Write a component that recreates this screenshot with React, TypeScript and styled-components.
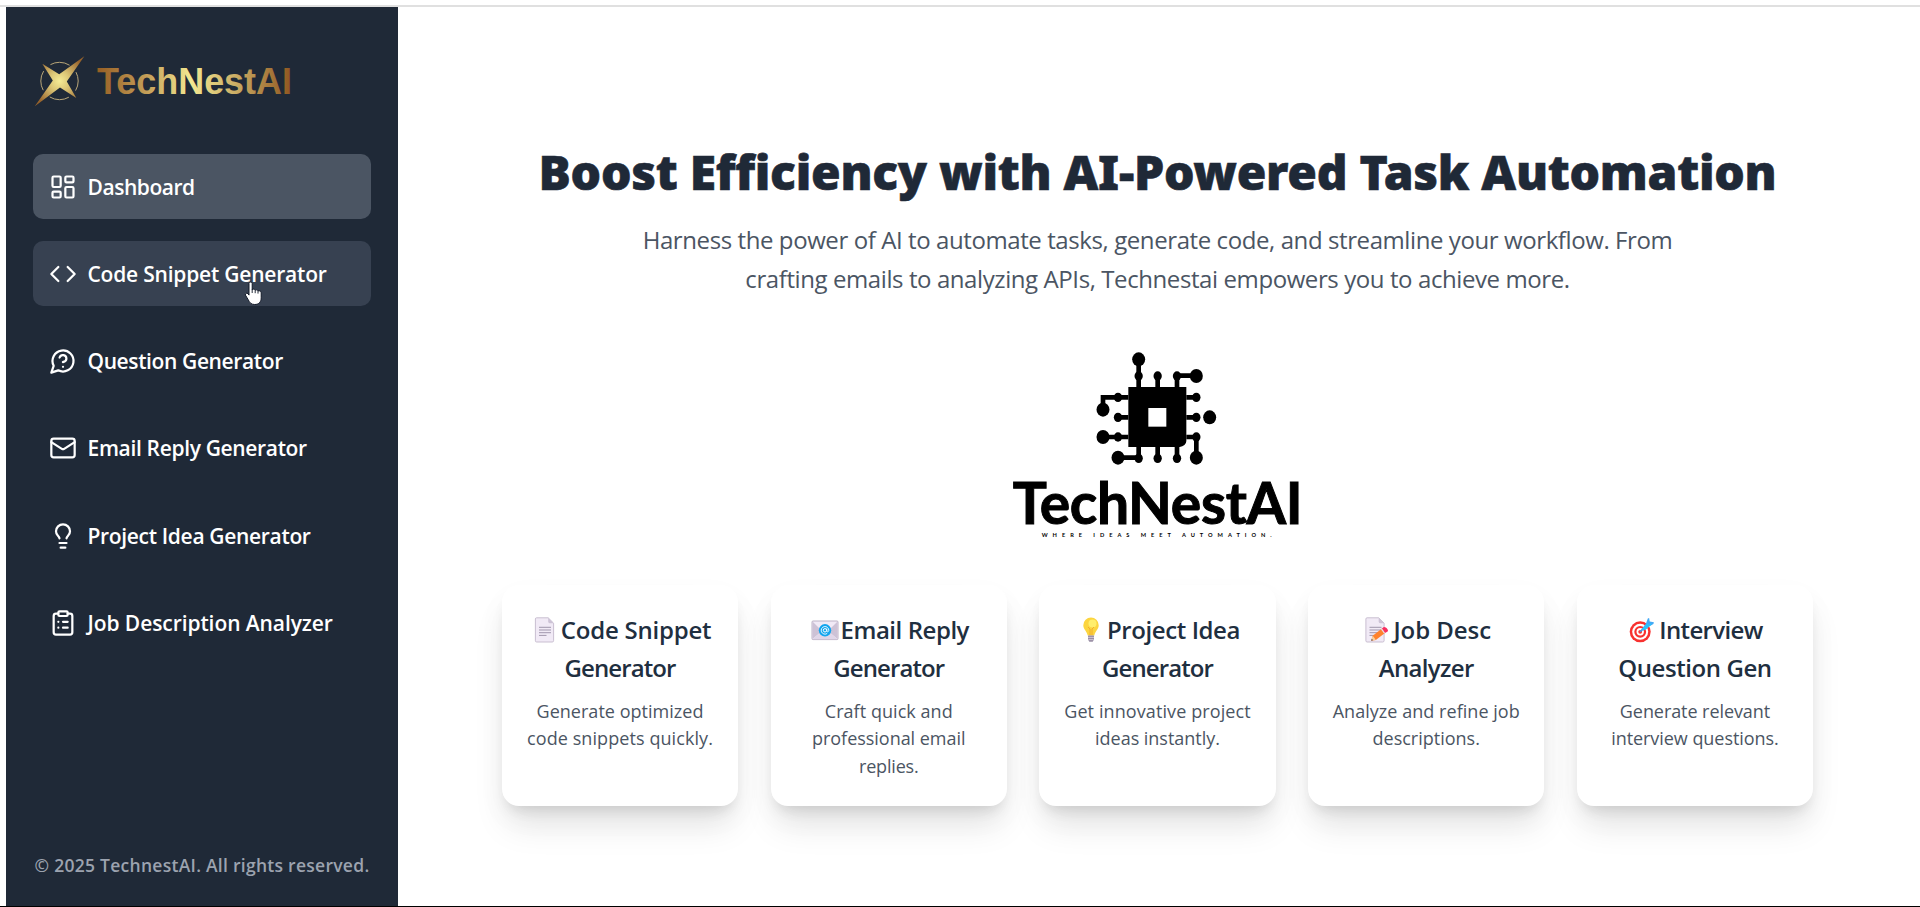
import React from "react";
import styled, { createGlobalStyle } from "styled-components";
import { LayoutDashboard, Code, Mail, Lightbulb, ClipboardList } from "lucide-react";

const GlobalStyle = createGlobalStyle`
  * { box-sizing: border-box; }
  body {
    margin: 0;
    background: #fff;
    font-family: "Open Sans", "Noto Sans", sans-serif;
  }
`;

const Page = styled.div`
  height: 907px;
  padding-top: 5px;
  display: flex;
  flex-direction: column;
  overflow: hidden;
  border-bottom: 1px solid #000;
`;

const Shell = styled.div`
  flex: 1;
  min-height: 0;
  display: flex;
  border-top: 2px solid #e0e0e0;
  padding-left: 6px;
`;

const Sidebar = styled.aside`
  width: 392px;
  flex-shrink: 0;
  display: flex;
  flex-direction: column;
  padding: 43px 27px 28px;
  background: #1f2937;
  color: #fff;
`;

const BrandLogo = styled.svg`
  display: block;
  width: 280px;
  height: 60px;
  margin-bottom: 44px;
`;

const Nav = styled.nav`
  display: flex;
  flex-direction: column;
  gap: 22.25px;
`;

const NavItem = styled.a<{ $bg?: string; $tracking: number }>`
  position: relative;
  display: flex;
  align-items: center;
  gap: 11px;
  height: 65px;
  padding-left: 15.5px;
  border-radius: 10px;
  background: ${(p) => p.$bg ?? "transparent"};
  font-size: 21px;
  font-weight: 600;
  letter-spacing: ${(p) => p.$tracking}px;
  white-space: nowrap;
`;

const Pointer = styled.svg`
  position: absolute;
  left: 211px;
  top: 39.5px;
  width: 19px;
  height: 25px;
`;

const Copyright = styled.p`
  margin: auto 0 0;
  text-align: center;
  color: #9ca3af;
  font-size: 17.5px;
  font-weight: 600;
  line-height: 26px;
  letter-spacing: 0.27px;
  white-space: nowrap;
`;

const Main = styled.main`
  flex: 1;
  display: flex;
  flex-direction: column;
  align-items: center;
  padding: 139px 3px 0 0;
`;

const Heading = styled.h1`
  margin: 0 0 22px;
  color: #1f2937;
  font-family: "Noto Sans", sans-serif;
  font-size: 48px;
  font-weight: 900;
  line-height: 52px;
  letter-spacing: -0.29px;
  -webkit-text-stroke: 0.6px #1f2937;
  white-space: nowrap;
`;

const Intro = styled.p`
  margin: 0 0 32px;
  width: 1060px;
  text-align: center;
  color: #4b5563;
  font-size: 24px;
  line-height: 39px;
  letter-spacing: -0.41px;
`;

const ChipLogo = styled.svg`
  display: block;
  width: 350px;
  height: 220px;
  margin-bottom: 35px;
`;

const CardGrid = styled.section`
  display: grid;
  grid-template-columns: repeat(5, 1fr);
  gap: 32.7px;
  width: 1311px;
`;

const Card = styled.article`
  height: 221px;
  padding-top: 26px;
  border-radius: 17px;
  background: #fff;
  text-align: center;
  box-shadow: 0 24px 34px -5px rgba(0, 0, 0, 0.1), 0 9px 14px -6px rgba(0, 0, 0, 0.12),
    0 12px 32px rgba(0, 0, 0, 0.03);
`;

const CardTitle = styled.h3`
  margin: 0 0 10.5px;
  color: #1f2f40;
  font-size: 24px;
  font-weight: 600;
  line-height: 38px;
`;

const CardText = styled.p`
  margin: 0;
  color: #4b5563;
  font-size: 18px;
  line-height: 27.5px;
`;

const Line = styled.span<{ $tracking: number }>`
  display: block;
  letter-spacing: ${(p) => p.$tracking}px;
  white-space: nowrap;
`;

const Emoji = styled.svg`
  width: 32px;
  height: 26px;
  vertical-align: -4px;
`;

const iconProps = { size: 28, strokeWidth: 1.9 };

const QuestionBubble = () => (
  <svg width="28" height="28" viewBox="0 0 24 24" fill="none" stroke="currentColor" strokeWidth="1.9" strokeLinecap="round" strokeLinejoin="round">
    <path d="M7.9 20A9 9 0 1 0 4 16.1L2 22Z" />
    <path d="M9.09 9a3 3 0 0 1 5.83 1c0 2-3 3-3 3" />
    <path d="M12 17h.01" />
  </svg>
);

const navItems = [
  { label: "Dashboard", icon: <LayoutDashboard {...iconProps} />, tracking: -0.46, bg: "#4b5563" },
  { label: "Code Snippet Generator", icon: <Code {...iconProps} />, tracking: -0.21, bg: "#374151", pointer: true },
  { label: "Question Generator", icon: <QuestionBubble />, tracking: -0.38 },
  { label: "Email Reply Generator", icon: <Mail {...iconProps} />, tracking: -0.34 },
  { label: "Project Idea Generator", icon: <Lightbulb {...iconProps} />, tracking: -0.33 },
  { label: "Job Description Analyzer", icon: <ClipboardList {...iconProps} />, tracking: -0.08 },
];

const Sheet = ({ x }: { x: number }) => (
  <>
    <path d={`M${x + 1.6} .8h11.6l5.4 5.4v17.4a1.4 1.4 0 0 1-1.4 1.4H${x + 1.6}a1.2 1.2 0 0 1-1.2-1.2V2A1.2 1.2 0 0 1 ${x + 1.6} .8z`} fill="#f1eaf6" stroke="#c9bfd1" strokeWidth="1" />
    <path d={`M${x + 13.2} .8v4a1.4 1.4 0 0 0 1.4 1.4h4z`} fill="#cdc3d6" />
    <path d={`M${x + 4} 10.3h12M${x + 4} 13h12M${x + 4} 15.7h12M${x + 4} 18.4h7.5`} stroke="#a197ad" strokeWidth="1" />
  </>
);

const emojis = {
  page: (
    <Emoji viewBox="0 0 32 26">
      <Sheet x={6} />
    </Emoji>
  ),
  email: (
    <Emoji viewBox="0 0 32 26">
      <rect x="3" y="4" width="26" height="18.6" rx="1" fill="#f1eaf6" stroke="#bdb2c6" />
      <path d="M3.5 4.5 13 14 3.5 22zM28.5 4.5 19 14l9.5 8z" fill="#cdc2d6" />
      <path d="M3.5 22.2 13 14h6l9.5 8.2z" fill="#e0d6e8" />
      <circle cx="16" cy="13.3" r="6.2" fill="#12a5ee" />
      <circle cx="16" cy="13.3" r="1.7" fill="none" stroke="#fff" />
      <path d="M17.8 11.5v2.3c0 1.5 2 1.2 2-.5a3.8 3.8 0 1 0-1.7 3.2" fill="none" stroke="#fff" strokeWidth=".9" />
    </Emoji>
  ),
  bulb: (
    <Emoji viewBox="0 0 32 26">
      <path d="M16 .5a7.7 7.7 0 0 0-7.7 7.7c0 4.2 3.7 6 4.4 10.2h6.6c.7-4.2 4.4-6 4.4-10.2A7.7 7.7 0 0 0 16 .5z" fill="#fcd53f" />
      <circle cx="17.5" cy="6.5" r="4" fill="#fff478" opacity=".8" />
      <path d="m13 10 2 2v6.4m4-8.4-2 2v6.4" fill="none" stroke="#f0a72e" strokeWidth=".9" />
      <path d="M13 18.4h6v4l-1.3 2.3h-3.4L13 22.4z" fill="#998ea4" />
      <path d="M13 20.4h6M13.2 22.6h5.6" stroke="#d3c9da" strokeWidth=".9" />
    </Emoji>
  ),
  memo: (
    <Emoji viewBox="0 0 32 26">
      <Sheet x={4.5} />
      <path d="m10.2 23.8 1.5-5 9.2-7.2 3.1 4.3-9.2 7z" fill="#ff822d" />
      <path d="m10.2 23.8 1.5-5 3.1 4z" fill="#f9d19a" />
      <path d="m10.2 23.8.6-2 1.2 1.5z" fill="#4b3f55" />
      <path d="m20.9 11.6 1.6-1.3c1.7-1.2 5.7 2.8 4.1 4.2L24 15.9z" fill="#f92f60" />
      <path d="m20 12.3.9-.7 3.1 4.3-1 .7z" fill="#e8dfee" />
    </Emoji>
  ),
  target: (
    <Emoji viewBox="1 0 32 26">
      <circle cx="14.2" cy="14.8" r="10.5" fill="#f8312f" />
      <circle cx="14.2" cy="14.8" r="8" fill="#fff" />
      <circle cx="14.2" cy="14.8" r="5.9" fill="#f8312f" />
      <circle cx="14.2" cy="14.8" r="3.7" fill="#fff" />
      <circle cx="14.2" cy="14.8" r="1.9" fill="#f8312f" />
      <path d="m14.2 14.8 7-7.5" stroke="#3aa0e8" strokeWidth="1.6" />
      <path d="M15.5 12.5 20 6.5l1.8-5 1.3-.5.6 3.6 4.2.7-.5 1.6-4.3 2.7-6.2 4.5z" fill="#44a9f5" />
      <path d="m16.5 12.7 5.6-6M19 12.5l6-5.5" stroke="#26c9fc" strokeWidth="1.3" />
    </Emoji>
  ),
};

type Tracked = [text: string, tracking: number];

const cards: { emoji: React.ReactNode; title: Tracked[]; text: Tracked[] }[] = [
  {
    emoji: emojis.page,
    title: [["Code Snippet", -0.22], ["Generator", -0.9]],
    text: [["Generate optimized", 0.03], ["code snippets quickly.", 0.08]],
  },
  {
    emoji: emojis.email,
    title: [["Email Reply", -0.45], ["Generator", -0.9]],
    text: [["Craft quick and", 0.05], ["professional email", -0.03], ["replies.", -0.18]],
  },
  {
    emoji: emojis.bulb,
    title: [["Project Idea", -0.4], ["Generator", -0.9]],
    text: [["Get innovative project", 0.1], ["ideas instantly.", -0.03]],
  },
  {
    emoji: emojis.memo,
    title: [["Job Desc", -0.05], ["Analyzer", -0.67]],
    text: [["Analyze and refine job", 0.04], ["descriptions.", 0]],
  },
  {
    emoji: emojis.target,
    title: [["Interview", -0.65], ["Question Gen", -0.43]],
    text: [["Generate relevant", -0.07], ["interview questions.", -0.05]],
  },
];

const Brand = () => (
  <BrandLogo viewBox="0 0 280 60">
    <defs>
      <linearGradient id="gold" x1="0" x2="1" y1="0" y2="0">
        <stop offset="0" stopColor="#965e24" />
        <stop offset=".25" stopColor="#c39d57" />
        <stop offset=".48" stopColor="#f3e891" />
        <stop offset=".7" stopColor="#cdb067" />
        <stop offset="1" stopColor="#8f5620" />
      </linearGradient>
      <radialGradient id="spark" cx="26.5" cy="31" r="28" gradientUnits="userSpaceOnUse">
        <stop offset="0" stopColor="#f6ec96" />
        <stop offset=".35" stopColor="#dcc777" />
        <stop offset="1" stopColor="#96622b" />
      </radialGradient>
    </defs>
    <circle cx="26.5" cy="31" r="18.7" fill="none" stroke="#b9a678" strokeWidth="1" strokeDasharray="20 9.37" strokeDashoffset="-19.4" />
    <path d="M51.3 6.3 33.8 31.5l9.5 16.5L27 37.6 1.8 56.2 19.8 30.5 9.3 13.8 26.2 24.3z" fill="url(#spark)" />
    <text x="64" y="44" fontFamily="'Liberation Sans', Arial, sans-serif" fontWeight="700" fontSize="36.5" fill="url(#gold)" textLength="195" lengthAdjust="spacingAndGlyphs">
      TechNestAI
    </text>
  </BrandLogo>
);

const Chip = () => (
  <ChipLogo viewBox="8 0 1050 660">
    <g fill="none" stroke="#000" strokeWidth="14">
      <path d="M475 88v90M532 138v40M590 178v-41h58M618 202h30M618 262h30M618 321h30v62M475 345v38h-62M532 345v38M590 345v38M444 202h-76v36M444 262h-30M444 321h-76" />
    </g>
    <path d="M444 171h174v162a22 18 0 0 1-20 18H444z" />
    <path d="M504 234h54v56h-54z" fill="#fff" />
    <g>
      {[[475, 88], [648, 138], [368, 239], [688, 262], [368, 321], [413, 383], [648, 383]].map(([x, y]) => (
        <ellipse key={`${x}-${y}`} cx={x} cy={y} rx="19.5" ry="21" />
      ))}
      {[[475, 138], [532, 138], [590, 138], [648, 202], [648, 262], [648, 321], [475, 385], [532, 385], [590, 385], [413, 202], [413, 262], [413, 321]].map(([x, y]) => (
        <ellipse key={`${x}-${y}`} cx={x} cy={y} rx="12.5" ry="14" />
      ))}
    </g>
    <text x="97" y="583" fontFamily="Lato, sans-serif" fontWeight="700" fontSize="171" stroke="#000" strokeWidth="3" textLength="870" lengthAdjust="spacing">
      TechNestAI
    </text>
    <text x="184" y="622" fontFamily="Lato, sans-serif" fontWeight="700" fontSize="17" textLength="690" lengthAdjust="spacing">
      WHERE IDEAS MEET AUTOMATION.
    </text>
  </ChipLogo>
);

export default function App() {
  return (
    <Page>
      <GlobalStyle />
      <Shell>
        <Sidebar>
          <Brand />
          <Nav>
            {navItems.map((item) => (
              <NavItem key={item.label} $bg={item.bg} $tracking={item.tracking}>
                {item.icon}
                {item.label}
                {item.pointer && (
                  <Pointer viewBox="0 0 19 25">
                    <path
                      d="M5 2.5C5 .6 8.2.6 8.2 2.5v6c.9-.7 2.7-.4 3 .6 1-.6 2.5-.2 2.8.8 1.2-.5 3.2 0 3.2 1.9v5c0 4-2.2 6.7-6.5 6.7-3.6 0-5-1.8-6.4-4.6L1.4 14c-.6-1.6 1.6-2.5 2.7-1.1l.9 1.2z"
                      fill="#fff"
                      stroke="#111827"
                      strokeWidth="1"
                    />
                    <path d="M8.2 8v4M11.2 9v3.2M14 10v2.6" stroke="#111827" strokeWidth=".9" />
                  </Pointer>
                )}
              </NavItem>
            ))}
          </Nav>
          <Copyright>© 2025 TechnestAI. All rights reserved.</Copyright>
        </Sidebar>
        <Main>
          <Heading>Boost Efficiency with AI-Powered Task Automation</Heading>
          <Intro>
            Harness the power of AI to automate tasks, generate code, and streamline your workflow. From crafting
            emails to analyzing APIs, Technestai empowers you to achieve more.
          </Intro>
          <Chip />
          <CardGrid>
            {cards.map((card) => (
              <Card key={card.title[0][0]}>
                <CardTitle>
                  {card.title.map(([text, tracking], i) => (
                    <Line key={text} $tracking={tracking}>
                      {i === 0 && card.emoji}
                      {text}
                    </Line>
                  ))}
                </CardTitle>
                <CardText>
                  {card.text.map(([text, tracking]) => (
                    <Line key={text} $tracking={tracking}>
                      {text}
                    </Line>
                  ))}
                </CardText>
              </Card>
            ))}
          </CardGrid>
        </Main>
      </Shell>
    </Page>
  );
}
